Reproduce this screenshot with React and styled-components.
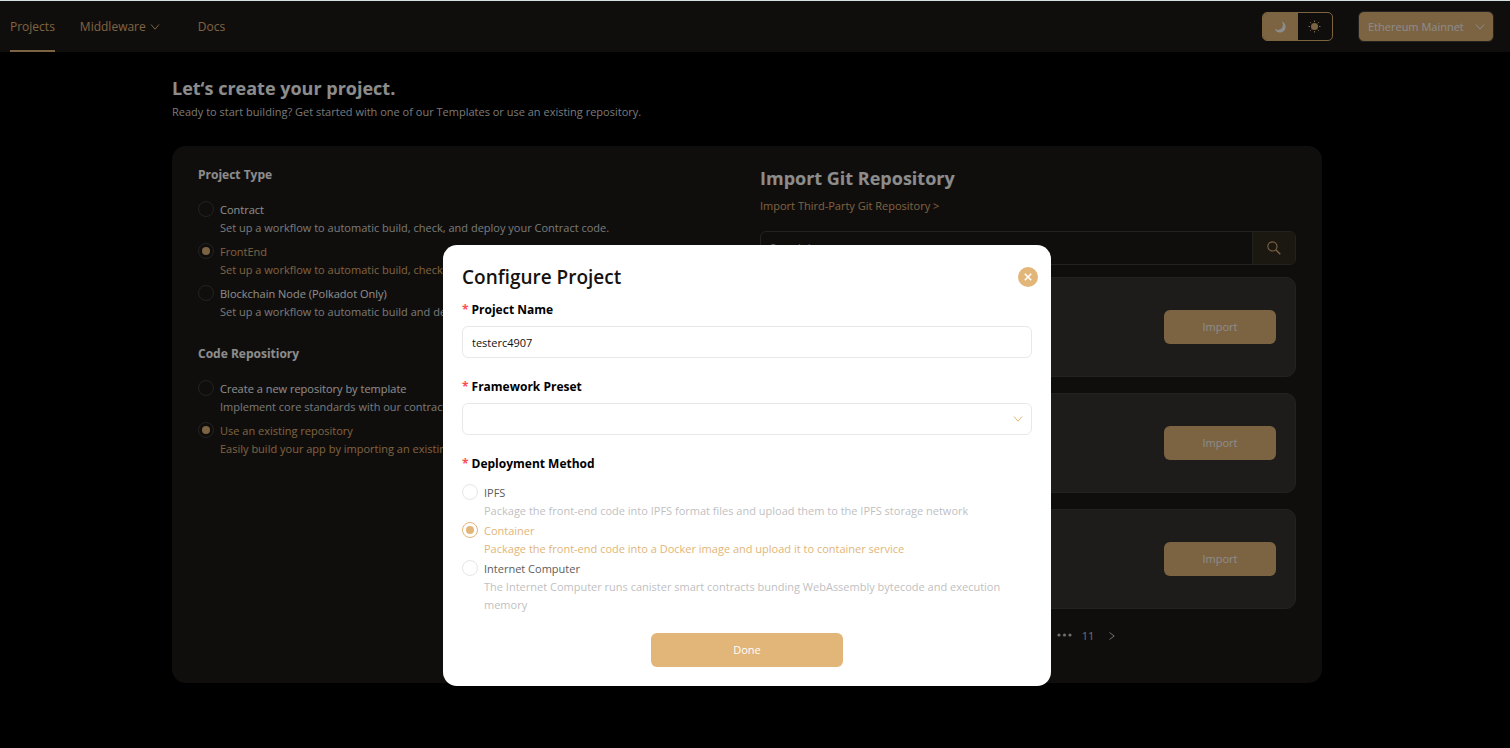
import React from 'react';
import styled, { createGlobalStyle, ThemeProvider } from 'styled-components';

const theme = {
  gold: '#e2b578',
  ink: '#151210',
  page: '#000000',
  panel: '#1d1b18',
  card: '#353330',
  line: '#3f3e3b',
  text: '#ffffff',
  soft: '#dcdcdc',
  radius: '6px',
};

const GlobalStyle = createGlobalStyle`
  *, *::before, *::after { box-sizing: border-box; }
  body {
    margin: 0;
    min-height: 100vh;
    background: #000;
    border-top: 1px solid #d6e0e0;
    font-family: 'Open Sans', 'Noto Sans', sans-serif;
    font-size: 11px;
    line-height: 18px;
    color: #fff;
  }
  h1, h2, h3, p, fieldset, legend { margin: 0; padding: 0; border: 0; }
  button, input, select { font: inherit; }
  button { cursor: pointer; }
`;

const Header = styled.header`
  display: flex;
  align-items: center;
  justify-content: space-between;
  height: 51px;
  padding: 0 16px 0 10px;
  background: ${(p) => p.theme.panel};
`;

const Nav = styled.nav`
  display: flex;
  align-self: stretch;
`;

const NavLink = styled.a`
  display: flex;
  align-items: center;
  gap: 4px;
  margin-right: ${(p) => p.$space || '25px'};
  padding-top: 2px;
  border-bottom: 2px solid ${(p) => (p.$active ? p.theme.gold : 'transparent')};
  color: ${(p) => p.theme.gold};
  font-size: 12px;
  text-decoration: none;
`;

const HeaderTools = styled.div`
  display: flex;
  align-items: center;
  gap: 25px;
`;

const ThemeToggle = styled.div`
  display: flex;
  width: 71px;
  height: 29px;
  overflow: hidden;
  border: 1px solid ${(p) => p.theme.gold};
  border-radius: 5px;
`;

const ToggleButton = styled.button`
  display: flex;
  flex: 1;
  align-items: center;
  justify-content: center;
  padding: 0;
  border: 0;
  background: ${(p) => (p.$on ? p.theme.gold : 'transparent')};
  color: ${(p) => (p.$on ? p.theme.text : p.theme.gold)};
`;

const SelectWrap = styled.div`
  display: grid;
  align-items: center;
  color: ${(p) => p.$arrow};

  > * { grid-area: 1 / 1; }
  > svg {
    justify-self: end;
    margin-right: 9px;
    pointer-events: none;
  }
`;

const NetworkSelect = styled.select`
  appearance: none;
  width: 136px;
  height: 31px;
  padding: 0 24px 0 9px;
  border: 1px solid ${(p) => p.theme.line};
  border-radius: ${(p) => p.theme.radius};
  background: ${(p) => p.theme.gold};
  color: ${(p) => p.theme.text};
  font-size: 11px;
`;

const Main = styled.main`
  padding: 22px 16px 24px 0;
`;

const Container = styled.div`
  width: calc(100% - 48px);
  max-width: 1150px;
  margin: 0 auto;
`;

const Title = styled.h1`
  font-size: 18px;
  font-weight: 700;
  line-height: 28px;
`;

const Subtitle = styled.p`
  margin-top: 1px;
  color: ${(p) => p.theme.soft};
`;

const Panel = styled.div`
  display: grid;
  grid-template-columns: 1fr 1fr;
  gap: 26px;
  margin-top: 25px;
  padding: 17px 26px 35px;
  border-radius: 14px;
  background: ${(p) => p.theme.panel};
`;

const Group = styled.fieldset`
  min-width: 0;
  & + & { margin-top: 21px; }
`;

const GroupTitle = styled.legend`
  margin-bottom: 14px;
  font-size: 12px;
  font-weight: 700;
  line-height: 24px;
`;

const Options = styled.div`
  display: flex;
  flex-direction: column;
  gap: ${(p) => p.$gap};
`;

const Option = styled.label`
  display: grid;
  grid-template-columns: 16px 1fr;
  column-gap: 6px;
  align-items: start;
`;

const OptionText = styled.span`
  color: ${(p) => p.$color};
`;

const OptionHint = styled.span`
  grid-column: 2;
  padding-right: 20px;
  color: ${(p) => p.$color};
`;

const Radio = styled.input`
  appearance: none;
  display: grid;
  place-items: center;
  width: 16px;
  height: 16px;
  margin: 0;
  border: 1px solid ${(p) => p.$ring};
  border-radius: 50%;

  &:checked::before {
    content: '';
    width: 8px;
    height: 8px;
    border-radius: 50%;
    background: ${(p) => p.theme.gold};
  }
`;

const Repos = styled.section`
  display: flex;
  flex-direction: column;
  min-width: 0;
`;

const RepoTitle = styled.h2`
  font-size: 18px;
  font-weight: 700;
  line-height: 30px;
`;

const ThirdParty = styled.a`
  align-self: flex-start;
  margin-top: 4px;
  color: ${(p) => p.theme.gold};
  text-decoration: none;
`;

const SearchBar = styled.form`
  display: flex;
  height: 34px;
  margin: 16px 0 12px;
  overflow: hidden;
  border: 1px solid ${(p) => p.theme.line};
  border-radius: ${(p) => p.theme.radius};
`;

const SearchInput = styled.input`
  flex: 1;
  min-width: 0;
  padding: 0 9px;
  border: 0;
  background: transparent;
  color: ${(p) => p.theme.text};
  &::placeholder { color: #bbb; }
`;

const SearchButton = styled.button`
  display: flex;
  align-items: center;
  justify-content: center;
  width: 43px;
  border: 0;
  border-left: 1px solid ${(p) => p.theme.line};
  background: #322c22;
  color: ${(p) => p.theme.gold};
`;

const RepoList = styled.div`
  display: flex;
  flex-direction: column;
  gap: 16px;
`;

const RepoCard = styled.article`
  display: flex;
  align-items: center;
  justify-content: flex-end;
  height: 100px;
  padding: 0 19px;
  border: 1px solid ${(p) => p.theme.line};
  border-radius: 10px;
  background: ${(p) => p.theme.card};
`;

const PrimaryButton = styled.button`
  width: ${(p) => p.$width};
  height: 34px;
  border: 0;
  border-radius: ${(p) => p.theme.radius};
  background: ${(p) => p.theme.gold};
  color: ${(p) => p.theme.text};
`;

const Pagination = styled.nav`
  display: flex;
  justify-content: center;
  margin-top: 15px;
`;

const PageButton = styled.button`
  display: flex;
  align-items: center;
  justify-content: center;
  width: 24px;
  height: 24px;
  padding: 0;
  border: 0;
  background: none;
  color: ${(p) => (p.$active ? p.theme.gold : '#c8c8c8')};
`;

const Overlay = styled.div`
  position: fixed;
  inset: 1px 0 0;
  display: flex;
  align-items: flex-start;
  justify-content: center;
  padding: 244px 16px 0 0;
  background: rgba(0, 0, 0, 0.45);
`;

const Dialog = styled.section`
  width: 608px;
  max-width: 100%;
  padding: 18px 0 19px;
  border-radius: 14px;
  background: #fff;
  color: #000;
`;

const DialogHeader = styled.header`
  display: flex;
  align-items: center;
  justify-content: space-between;
  padding: 0 13px 0 19px;
`;

const DialogTitle = styled.h2`
  color: ${(p) => p.theme.ink};
  font-size: 19px;
  font-weight: 600;
  line-height: 28px;
`;

const CloseButton = styled.button`
  display: flex;
  align-items: center;
  justify-content: center;
  width: 20px;
  height: 20px;
  padding: 0;
  border: 0;
  border-radius: 50%;
  background: ${(p) => p.theme.gold};
  color: #fff;
`;

const Form = styled.form`
  display: flex;
  flex-direction: column;
  gap: 17px;
  padding: 7px 19px 0;
`;

const Field = styled.div`
  display: flex;
  flex-direction: column;
  gap: 4px;
`;

const fieldLabel = `
  display: flex;
  gap: 3px;
  padding: 0;
  font-size: 12px;
  font-weight: 700;
  line-height: 24px;
`;

const FieldLabel = styled.label`
  ${fieldLabel}
`;

const FieldLegend = styled.legend`
  ${fieldLabel}
  margin-bottom: 8px;
`;

const Required = styled.span`
  color: #ff4d4f;
`;

const TextInput = styled.input`
  width: 100%;
  height: 32px;
  padding: 0 9px;
  border: 1px solid #e8e8e8;
  border-radius: ${(p) => p.theme.radius};
  background: #fff;
  color: #111;
`;

const Select = styled(TextInput)`
  appearance: none;
`;

const Actions = styled.div`
  display: flex;
  justify-content: center;
  margin-top: 2px;
`;

const Chevron = ({ w = 10, h = 6 }) => (
  <svg width={w} height={h} viewBox="0 0 10 6" fill="none" stroke="currentColor" strokeWidth="1" aria-hidden="true">
    <path d="M1 0.5 5 5.2 9 0.5" />
  </svg>
);

const Moon = () => (
  <svg width="12" height="12" viewBox="0 0 12 12" fill="currentColor" aria-hidden="true">
    <path d="M7.6 0.6A5.6 5.6 0 1 1 0.6 7.4 4.6 4.6 0 0 0 7.6 0.6Z" />
  </svg>
);

const Sun = () => (
  <svg width="13" height="13" viewBox="0 0 13 13" aria-hidden="true">
    <circle cx="6.5" cy="6.5" r="3.5" fill="currentColor" />
    <path
      d="M6.5 0.5v1.5M6.5 11v1.5M0.5 6.5H2M11 6.5h1.5M2.2 2.2l1 1M9.8 9.8l1 1M2.2 10.8l1-1M9.8 3.2l1-1"
      stroke="currentColor"
      strokeWidth="1"
    />
  </svg>
);

const SearchIcon = () => (
  <svg width="14" height="14" viewBox="0 0 15 15" fill="none" stroke="currentColor" strokeWidth="1.2" aria-hidden="true">
    <circle cx="5.8" cy="5.8" r="4.9" />
    <path d="M9.4 9.4 14.2 14.2" strokeWidth="1.5" />
  </svg>
);

const Cross = () => (
  <svg width="8" height="8" viewBox="0 0 8 8" fill="none" stroke="currentColor" strokeWidth="1.6" aria-hidden="true">
    <path d="M0.8 0.8 7.2 7.2M7.2 0.8 0.8 7.2" />
  </svg>
);

const Angle = ({ left }) => (
  <svg width="6" height="8" viewBox="0 0 6 8" fill="none" stroke="currentColor" aria-hidden="true">
    <path d={left ? 'M5.5 0.5 0.8 4 5.5 7.5' : 'M0.5 0.5 5.2 4 0.5 7.5'} />
  </svg>
);

const Dots = () => (
  <svg width="15" height="6" viewBox="0 0 15 6" fill="currentColor" aria-hidden="true">
    <circle cx="2" cy="2" r="1.6" />
    <circle cx="7.5" cy="2" r="1.6" />
    <circle cx="13" cy="2" r="1.6" />
  </svg>
);

const projectTypes = [
  { label: 'Contract', hint: 'Set up a workflow to automatic build, check, and deploy your Contract code.' },
  { label: 'FrontEnd', hint: 'Set up a workflow to automatic build, check, and deploy your FrontEnd code.', checked: true },
  { label: 'Blockchain Node (Polkadot Only)', hint: 'Set up a workflow to automatic build and deploy your node.' },
];

const repositoryModes = [
  { label: 'Create a new repository by template', hint: 'Implement core standards with our contract templates.' },
  { label: 'Use an existing repository', hint: 'Easily build your app by importing an existing repository.', checked: true },
];

const deployMethods = [
  { label: 'IPFS', hint: 'Package the front-end code into IPFS format files and upload them to the IPFS storage network' },
  { label: 'Container', hint: 'Package the front-end code into a Docker image and upload it to container service', checked: true },
  {
    label: 'Internet Computer',
    hint: 'The Internet Computer runs canister smart contracts bunding WebAssembly bytecode and execution memory',
  },
];

const palettes = {
  dark: { text: '#fff', hint: '#dcdcdc', ring: '#3f3e3b', ringOn: '#3f3e3b', gap: '6px' },
  light: { text: '#5c5c5c', hint: '#bfbfc2', ring: '#e6e6e6', ringOn: '#e2b578', gap: '2px' },
};

function RadioOptions({ name, items, tone }) {
  const c = palettes[tone];
  return (
    <Options $gap={c.gap}>
      {items.map((item) => (
        <Option key={item.label}>
          <Radio type="radio" name={name} defaultChecked={item.checked} $ring={item.checked ? c.ringOn : c.ring} />
          <OptionText $color={item.checked ? theme.gold : c.text}>{item.label}</OptionText>
          <OptionHint $color={item.checked ? theme.gold : c.hint}>{item.hint}</OptionHint>
        </Option>
      ))}
    </Options>
  );
}

export default function App() {
  return (
    <ThemeProvider theme={theme}>
      <GlobalStyle />
      <Header>
        <Nav aria-label="Main">
          <NavLink href="#projects" $active>Projects</NavLink>
          <NavLink href="#middleware" $space="38px">
            Middleware
            <Chevron />
          </NavLink>
          <NavLink href="#docs">Docs</NavLink>
        </Nav>
        <HeaderTools>
          <ThemeToggle>
            <ToggleButton type="button" aria-label="Dark theme" $on><Moon /></ToggleButton>
            <ToggleButton type="button" aria-label="Light theme"><Sun /></ToggleButton>
          </ThemeToggle>
          <SelectWrap $arrow="#fff">
            <NetworkSelect aria-label="Network">
              <option>Ethereum Mainnet</option>
            </NetworkSelect>
            <Chevron />
          </SelectWrap>
        </HeaderTools>
      </Header>

      <Main>
        <Container>
          <Title>Let‘s create your project.</Title>
          <Subtitle>Ready to start building? Get started with one of our Templates or use an existing repository.</Subtitle>
          <Panel>
            <div>
              <Group>
                <GroupTitle>Project Type</GroupTitle>
                <RadioOptions name="type" items={projectTypes} tone="dark" />
              </Group>
              <Group>
                <GroupTitle>Code Repositiory</GroupTitle>
                <RadioOptions name="repository" items={repositoryModes} tone="dark" />
              </Group>
            </div>
            <Repos>
              <RepoTitle>Import Git Repository</RepoTitle>
              <ThirdParty href="#third-party">Import Third-Party Git Repository &gt;</ThirdParty>
              <SearchBar role="search">
                <SearchInput type="text" aria-label="Search repositories" placeholder="Search here..." />
                <SearchButton type="button" aria-label="Search"><SearchIcon /></SearchButton>
              </SearchBar>
              <RepoList>
                {[1, 2, 3].map((id) => (
                  <RepoCard key={id}>
                    <PrimaryButton type="button" $width="112px">Import</PrimaryButton>
                  </RepoCard>
                ))}
              </RepoList>
              <Pagination aria-label="Pages">
                <PageButton type="button" aria-label="Previous"><Angle left /></PageButton>
                <PageButton type="button" $active>1</PageButton>
                <PageButton type="button">2</PageButton>
                <PageButton type="button">3</PageButton>
                <PageButton type="button">4</PageButton>
                <PageButton type="button" aria-label="More pages"><Dots /></PageButton>
                <PageButton type="button">11</PageButton>
                <PageButton type="button" aria-label="Next"><Angle /></PageButton>
              </Pagination>
            </Repos>
          </Panel>
        </Container>
      </Main>

      <Overlay>
        <Dialog role="dialog" aria-modal="true" aria-labelledby="dialog-title">
          <DialogHeader>
            <DialogTitle id="dialog-title">Configure Project</DialogTitle>
            <CloseButton type="button" aria-label="Close"><Cross /></CloseButton>
          </DialogHeader>
          <Form>
            <Field>
              <FieldLabel htmlFor="project-name"><Required>*</Required>Project Name</FieldLabel>
              <TextInput id="project-name" type="text" defaultValue="testerc4907" />
            </Field>
            <Field>
              <FieldLabel htmlFor="framework"><Required>*</Required>Framework Preset</FieldLabel>
              <SelectWrap $arrow="#e2b578">
                <Select as="select" id="framework">
                  <option value="" />
                </Select>
                <Chevron />
              </SelectWrap>
            </Field>
            <Group>
              <FieldLegend><Required>*</Required>Deployment Method</FieldLegend>
              <RadioOptions name="deploy" items={deployMethods} tone="light" />
            </Group>
            <Actions>
              <PrimaryButton type="button" $width="192px">Done</PrimaryButton>
            </Actions>
          </Form>
        </Dialog>
      </Overlay>
    </ThemeProvider>
  );
}
